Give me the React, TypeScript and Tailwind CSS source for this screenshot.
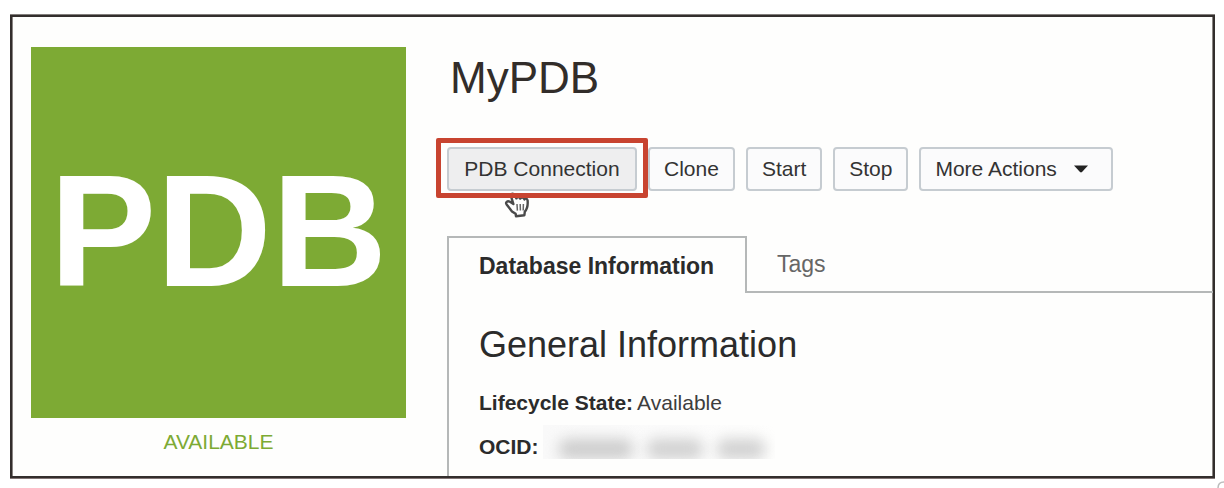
import type { ReactNode } from "react";

function ActionButton({ children, className = "bg-[#fbfbfc]" }: { children: ReactNode; className?: string }) {
  return (
    <button
      type="button"
      className={`flex h-11 items-center justify-center rounded-[4px] border-2 border-[#c6ccd1] px-3.5 text-[21px] leading-6 whitespace-nowrap text-[#333333] ${className}`}
    >
      {children}
    </button>
  );
}

function HandCursor() {
  return (
    <svg
      viewBox="0 0 26 26"
      className="pointer-events-none absolute top-[45px] left-[57px] h-[26px] w-[26px]"
      aria-hidden="true"
    >
      <path
        d="M8.5 1.8 C6.8 1.8 6.6 3.4 7.2 4.8 L9.4 12 L5.6 9.6 C3.4 8.6 1.2 10.4 2.6 12.4 L8 19.4 L11.6 21.8 L12 24.2 L20.4 23.2 L20.8 19.6 C23.4 17 24 13 23.6 8.4 C23.2 6.4 21.2 6 20.4 7.4 C19.6 5.2 17 5 16.2 6.6 C15.2 4.6 12.8 4.8 12.4 6.4 L10.6 3 C10 2 9.4 1.8 8.5 1.8 Z"
        fill="#ffffff"
        stroke="#4a4a4a"
        strokeWidth="2.4"
        strokeLinejoin="round"
      />
      <path d="M13 12 L13.4 18.6 M16.2 12 L16.4 18.6 M19.4 12 L19.2 18.6" stroke="#666666" strokeWidth="1.5" fill="none" />
    </svg>
  );
}

function RedactedValue() {
  return (
    <span className="flex h-[34px] w-[232px] items-end gap-3.5 overflow-hidden bg-linear-to-r from-[#f9f9f9] via-[#fbfbfb] to-[#fefefd] pl-4">
      <span className="h-5 w-[74px] rounded-lg bg-[#cdcdcd] blur-[7px]" />
      <span className="h-5 w-14 rounded-lg bg-[#d1d1d1] blur-[7px]" />
      <span className="h-5 w-12 rounded-lg bg-[#d1d1d1] blur-[7px]" />
    </span>
  );
}

export default function App() {
  return (
    <div className="relative flex min-h-screen overflow-hidden bg-white pt-[15px] pr-[9px] pb-2.5 pl-2.5 font-['Liberation_Sans',Arial,sans-serif]">
      <main className="flex flex-1 border-2 border-[#332e2d] bg-[#fefefd] shadow-[0_-1px_0_#827e7c,0_1px_0_#827575,inset_1px_0_0_#8a8583,inset_-1px_0_0_#8a8583]">
        <aside className="ml-[19px] w-[375px] shrink-0 pt-[30px]">
          <div className="flex h-[371px] items-center justify-center bg-[#7daa34] pb-1 text-[160px] leading-none font-bold text-white">
            PDB
          </div>
          <p className="pt-3 text-center text-[21px] leading-6 text-[#7daa34]">AVAILABLE</p>
        </aside>

        <section className="ml-[41px] flex min-w-0 flex-1 flex-col">
          <h1 className="pt-9 pl-[3px] text-[44px] leading-[50px] text-[#322d2a]">MyPDB</h1>

          <div className="mt-11 flex gap-[11px]">
            <div className="relative z-10">
              <ActionButton className="w-[190px] bg-[#eeeeef]">PDB Connection</ActionButton>
              <HandCursor />
              <div className="pointer-events-none absolute -top-[9px] -right-[11px] -bottom-[7px] -left-[11px] rounded-[2px] border-[5px] border-[#c84430]" />
            </div>
            <ActionButton>Clone</ActionButton>
            <ActionButton>Start</ActionButton>
            <ActionButton>Stop</ActionButton>
            <ActionButton>
              More Actions
              <svg viewBox="0 0 14 8" className="mr-2 ml-4 h-2 w-4" aria-hidden="true">
                <path d="M0 0.5 H14 L8 7 Q7 7.8 6 7 Z" fill="#222222" />
              </svg>
            </ActionButton>
          </div>

          <div className="mt-[45px] flex" role="tablist">
            <button
              type="button"
              role="tab"
              aria-selected="true"
              className="h-[57px] w-[300px] border-t-2 border-r-2 border-l-2 border-[#b5b8b8] pl-[30px] text-left text-[23px] leading-7 font-bold whitespace-nowrap text-[#2b2b2b]"
            >
              Database Information
            </button>
            <button
              type="button"
              role="tab"
              aria-selected="false"
              className="h-[57px] flex-1 border-b-2 border-[#b5b8b8] pl-[30px] text-left text-[23px] leading-7 text-[#666666]"
            >
              Tags
            </button>
          </div>

          <div className="flex-1 border-l-2 border-[#b5b8b8] pl-[30px]" role="tabpanel">
            <h2 className="pt-8 text-[36px] leading-10 text-[#2b2b2b]">General Information</h2>
            <dl className="pt-[26px] text-[21px] leading-6">
              <div className="flex gap-1">
                <dt className="font-bold text-[#2b2b2b]">Lifecycle State:</dt>
                <dd className="text-[#3d3d3d]">Available</dd>
              </div>
              <div className="flex h-11 items-end gap-1">
                <dt className="font-bold text-[#2b2b2b]">OCID:</dt>
                <dd>
                  <RedactedValue />
                </dd>
              </div>
            </dl>
          </div>
        </section>
      </main>
      <svg viewBox="0 0 7 7" className="absolute right-0 bottom-0 h-[7px] w-[7px]" aria-hidden="true">
        <path d="M1 7 Q1 1 7 1" fill="none" stroke="#bdbdbd" strokeWidth="1.5" />
      </svg>
    </div>
  );
}
